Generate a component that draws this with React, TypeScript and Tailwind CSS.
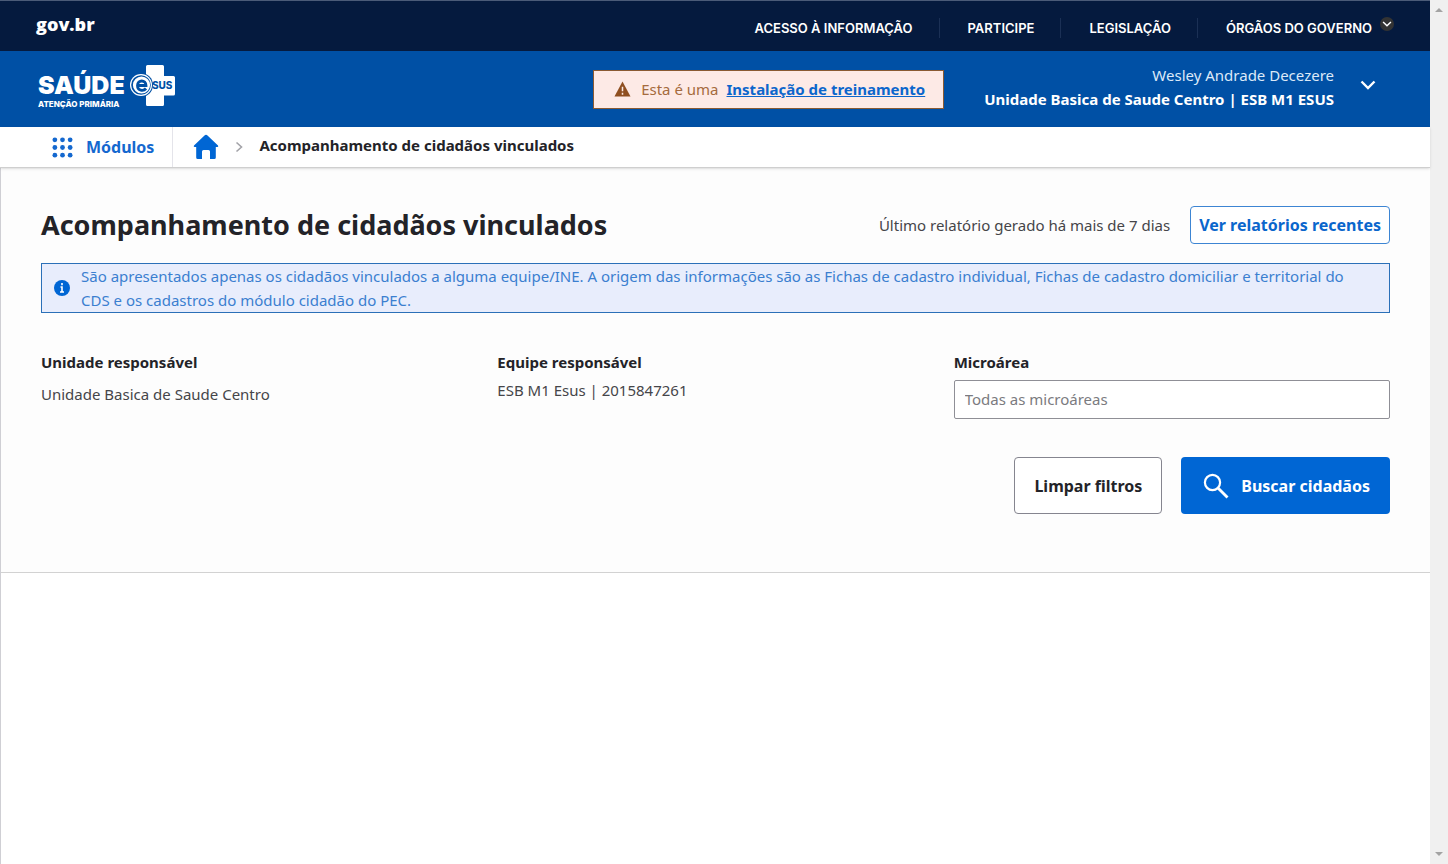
import React from "react";

const GOV_LINKS = ["ACESSO À INFORMAÇÃO", "PARTICIPE", "LEGISLAÇÃO"];
const DOTS = [3, 11, 19];

function Chevron({ className }: { className: string }) {
  return (
    <svg viewBox="0 0 16 10" className={className} fill="none" stroke="currentColor" strokeWidth="2.4" aria-hidden="true">
      <path d="M1.5 1.5 8 8l6.5-6.5" />
    </svg>
  );
}

function GovBar() {
  return (
    <header className="flex h-[51px] items-center justify-between border-t border-[#4b5b78] bg-[#051a3e] pr-9 pl-9 text-white">
      <a href="#gov" className="pb-1 font-['Open_Sans',sans-serif] text-[18px] leading-6 font-extrabold">
        gov.br
      </a>
      <nav aria-label="Governo" className="flex items-center pt-1 font-[Inter,sans-serif] text-[13px] leading-5 font-semibold">
        {GOV_LINKS.map((label) => (
          <a key={label} href="#gov" className="mr-7 border-r border-[#1b3055] pr-[26px]">
            {label}
          </a>
        ))}
        <button type="button" className="flex items-center gap-2">
          ÓRGÃOS DO GOVERNO
          <span className="mb-2 flex size-[14px] items-center justify-center rounded-full bg-[#333]">
            <Chevron className="h-[6px] w-[10px]" />
          </span>
        </button>
      </nav>
    </header>
  );
}

function Logo() {
  return (
    <a href="#inicio" aria-label="e-SUS Atenção Primária" className="flex items-start gap-1 self-start pt-[13px] text-white">
      <span className="flex flex-col pt-2 font-[Inter,sans-serif]">
        <span className="text-[25px] leading-[26px] font-black">SAÚDE</span>
        <span className="text-[8px] leading-3 font-extrabold">ATENÇÃO PRIMÁRIA</span>
      </span>
      <svg viewBox="0 0 48 44" className="h-11 w-12" aria-hidden="true">
        <path
          fill="#fff"
          d="M17 2.500Q17 1 18.500 1h15Q35 1 35 2.500V12h9.500Q46 12 46 13.500v16.500Q46 31.500 44.500 31.500H35v9Q35 42 33.500 42h-15Q17 42 17 40.500Z"
        />
        <circle cx="12" cy="21" r="12" fill="#0050a5" />
        <circle cx="12" cy="21" r="11" fill="#fff" />
        <circle cx="12" cy="21" r="9.800" fill="#0050a5" />
        <circle cx="12.500" cy="21" r="8.600" fill="#fff" />
        <path d="M9 21.500h8c0-6-8.500-6-8.500 0 0 5.500 6 6 8.500 3" fill="none" stroke="#0050a5" strokeWidth="2.800" />
        <text x="23" y="25" fill="#0050a5" className="font-[Inter,sans-serif] text-[10px] font-extrabold">
          SUS
        </text>
      </svg>
    </a>
  );
}

function AppHeader() {
  return (
    <div className="flex h-[76px] items-center bg-[#0050a5] pr-[54px] pl-[38px] text-white">
      <Logo />
      <div className="ml-auto flex h-[39px] items-center gap-2 border border-[#8a5a33] bg-[#fdeae6] pr-[18px] pl-5 text-[#a56b3d]">
        <svg viewBox="0 0 18 16" className="mr-0.5 h-4 w-[17px]" aria-hidden="true">
          <path d="M9 0 17.500 16H.5Z" fill="#8f4f20" />
          <path d="M9 5.500v5M9 12v2" stroke="#fdeae6" strokeWidth="1.600" />
        </svg>
        <span>Esta é uma</span>
        <a href="#treinamento" className="font-bold text-[#0c66cc] underline">
          Instalação de treinamento
        </a>
      </div>
      <button type="button" className="ml-10 flex items-center gap-[26px] pb-1 text-right">
        <span className="flex flex-col leading-6">
          <span className="text-[#dce9f8]">Wesley Andrade Decezere</span>
          <span className="font-bold">Unidade Basica de Saude Centro | ESB M1 ESUS</span>
        </span>
        <Chevron className="mb-1 h-[10px] w-4" />
      </button>
    </div>
  );
}

function Breadcrumb() {
  return (
    <nav aria-label="Navegação" className="relative flex h-[41px] items-stretch border-b border-[#cfcfcf] bg-white shadow-sm">
      <button type="button" className="flex items-center gap-[13px] border-r border-[#e4e4ea] pr-[18px] pl-[52px] text-base font-bold text-[#1468cf]">
        <svg viewBox="0 0 22 22" className="size-[21px]" fill="currentColor" aria-hidden="true">
          {DOTS.map((y) => DOTS.map((x) => <circle key={`${x}-${y}`} cx={x} cy={y} r="2.500" />))}
        </svg>
        Módulos
      </button>
      <a href="#inicio" aria-label="Início" className="ml-5 flex items-center text-[#0066d4]">
        <svg viewBox="0 0 26 26" className="size-[26px]" fill="currentColor" aria-hidden="true">
          <path d="M13 .8Q13.800 .8 14.500 1.500L25 11.500Q25.800 12.800 24.500 13H22.800V23.500Q22.800 25 21.300 25h-4.300v-7.500Q17 16 15.500 16h-5Q9 16 9 17.500V25H4.700Q3.200 25 3.200 23.500V13H1.500Q.2 12.800 1 11.500L11.500 1.500Q12.200 .8 13 .8Z" />
        </svg>
      </a>
      <svg viewBox="0 0 8 12" className="mx-4 h-3 w-2 self-center" fill="none" stroke="#a3a3a8" strokeWidth="1.600" aria-hidden="true">
        <path d="m1.500 1.500 5 4.500-5 4.500" />
      </svg>
      <span className="self-center pb-1 font-bold">Acompanhamento de cidadãos vinculados</span>
    </nav>
  );
}

function Filters() {
  return (
    <form className="mt-[37px]" onSubmit={(event) => event.preventDefault()}>
      <div className="grid grid-cols-3 gap-5">
        <div>
          <h2 className="leading-6 font-bold">Unidade responsável</h2>
          <p className="mt-2 leading-6 text-[#454549]">Unidade Basica de Saude Centro</p>
        </div>
        <div>
          <h2 className="leading-6 font-bold">Equipe responsável</h2>
          <p className="mt-1 leading-6 text-[#454549]">ESB M1 Esus | 2015847261</p>
        </div>
        <div>
          <label htmlFor="microarea" className="block leading-6 font-bold">
            Microárea
          </label>
          <input
            id="microarea"
            type="text"
            placeholder="Todas as microáreas"
            className="mt-1.5 block h-[39px] w-full rounded-xs border border-[#8f8f96] bg-white px-2.5 pb-0.5 placeholder:text-[#7b7b80]"
          />
        </div>
      </div>
      <div className="mt-[38px] flex justify-end gap-[19px]">
        <button type="reset" className="h-[57px] rounded border border-[#85858f] bg-white px-[19px] text-base font-bold">
          Limpar filtros
        </button>
        <button type="submit" className="flex h-[57px] items-center gap-3 rounded bg-[#0066d4] pr-5 pl-[22px] text-base font-bold text-white">
          <svg viewBox="0 0 26 26" className="size-[26px]" fill="none" stroke="currentColor" strokeWidth="2.200" aria-hidden="true">
            <circle cx="9.500" cy="9.500" r="7.600" />
            <path d="m15 15 9.500 9.500" strokeWidth="2.800" />
          </svg>
          Buscar cidadãos
        </button>
      </div>
    </form>
  );
}

function Scrollbar() {
  return (
    <div aria-hidden="true" className="flex w-[18px] flex-col items-center justify-between bg-[#f0f0f0] py-2">
      <svg viewBox="0 0 8 4" className="h-1 w-2" fill="#a3a3a3">
        <path d="M4 0 8 4H0Z" />
      </svg>
      <svg viewBox="0 0 8 4" className="h-1 w-2" fill="#a3a3a3">
        <path d="M0 0h8L4 4Z" />
      </svg>
    </div>
  );
}

export default function App() {
  return (
    <div className="flex min-h-screen bg-white font-['Noto_Sans',sans-serif] text-[15px] text-[#232328]">
      <div className="flex min-w-0 flex-1 flex-col">
        <GovBar />
        <AppHeader />
        <Breadcrumb />
        <main className="flex-1 border-l border-[#cfcfd4]">
          <section className="border-b border-[#d2d2d2] bg-[#fdfdfd] px-10 pt-[38px] pb-[58px]">
            <div className="flex items-center justify-between">
              <h1 className="text-[27px] leading-9 font-bold">Acompanhamento de cidadãos vinculados</h1>
              <div className="flex items-center gap-5">
                <p className="text-[#454549]">Último relatório gerado há mais de 7 dias</p>
                <button type="button" className="h-[38px] rounded border border-[#3d85d3] bg-white px-2 text-base font-bold text-[#0a66cc]">
                  Ver relatórios recentes
                </button>
              </div>
            </div>
            <div className="mt-[19px] flex items-center gap-[11px] border border-[#2b70b8] bg-[#e8edfc] pr-9 pl-3 text-[#3b7fd0]">
              <svg viewBox="0 0 16 16" className="size-4 shrink-0" aria-hidden="true">
                <circle cx="8" cy="8" r="8" fill="#0066d4" />
                <path d="M8 3v2.200M6.500 7H8v4.500M6 12h4" fill="none" stroke="#fff" strokeWidth="1.600" />
              </svg>
              <p className="leading-6">
                São apresentados apenas os cidadãos vinculados a alguma equipe/INE. A origem das informações são as Fichas
                de cadastro individual, Fichas de cadastro domiciliar e territorial do CDS e os cadastros do módulo cidadão
                do PEC.
              </p>
            </div>
            <Filters />
          </section>
        </main>
      </div>
      <Scrollbar />
    </div>
  );
}
